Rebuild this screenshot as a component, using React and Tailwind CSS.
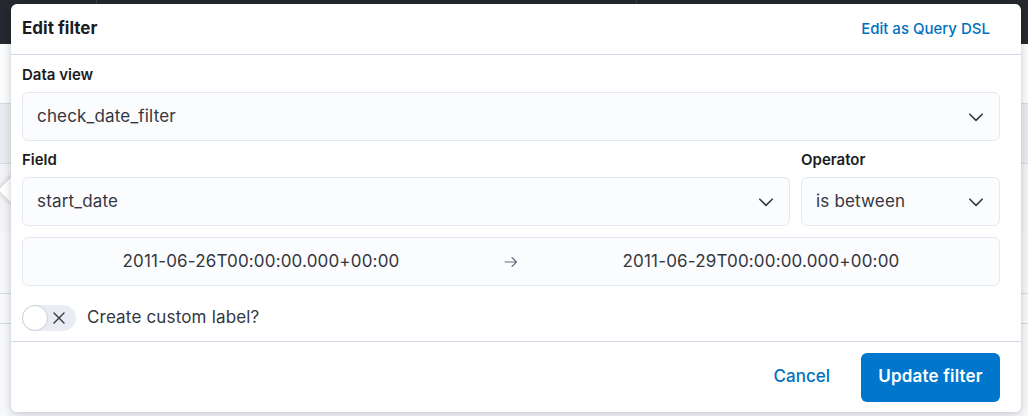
import React from "react";

function Chevron() {
  return (
    <svg width="18" height="18" viewBox="0 0 16 16" fill="none" className="shrink-0">
      <path d="M2.5 5.5 L8 11 L13.5 5.5" stroke="#343741" strokeWidth="1.4" strokeLinecap="round" strokeLinejoin="round" />
    </svg>
  );
}

function Select({ value, className = "" }) {
  return (
    <div className={`h-[49px] rounded-[6px] border border-[#e4e8f1] bg-[#fbfcfd] flex items-center justify-between pl-[14px] pr-[14px] ${className}`}>
      <span className="text-[17px] tracking-[0.01em] text-[#343741]">{value}</span>
      <Chevron />
    </div>
  );
}

function Label({ children }) {
  return <div className="text-[15px] font-semibold text-[#1a1c21] h-[20px] leading-[20px] mb-[7px]">{children}</div>;
}

export default function App() {
  return (
    <div className="relative w-[1028px] h-[416px] overflow-hidden bg-[#f7f8fc]" style={{ fontFamily: "Inter, 'Noto Sans', sans-serif" }}>
      {/* background app */}
      <div className="flex flex-col h-full">
        <div className="h-[44px] bg-[#25282f] flex">
          <div className="w-[97px] border-r border-[#3a3d45]" />
          <div className="w-[540px] border-r border-[#3a3d45]" />
        </div>
        <div className="h-[60px] bg-[#fafbfd] border-b border-[#d3dae6]" />
        <div className="h-[60px] bg-[#e9ecf1] border-b border-[#d3dae6]" />
        <div className="h-[68px] bg-[#f1f3f7]" />
        <div className="h-[62px] bg-[#f5f6f9] border-b border-[#d3dae6]" />
        <div className="h-[30px] bg-[#f7f8fb] border-b border-[#d3dae6]" />
        <div className="flex-1 bg-[#f7f8fb]" />
      </div>

      {/* popover arrow */}
      <div className="absolute left-[3px] top-[179px] w-[22px] h-[22px] bg-white rotate-45 shadow-[-2px_2px_4px_rgba(0,0,0,0.12)]" />

      {/* popover */}
      <div className="absolute left-[11px] top-[4px] w-[1010px] h-[408px] bg-white rounded-[6px] shadow-[0_2px_8px_rgba(0,0,0,0.2)] flex flex-col text-[#343741]">
        <div className="h-[51px] shrink-0 border-b border-[#d3dae6] flex items-center justify-between pl-[11px] pr-[31px]">
          <span className="text-[17px] font-bold text-[#1a1c21]">Edit filter</span>
          <span className="text-[15px] font-medium text-[#0071c2]">Edit as Query DSL</span>
        </div>
        <div className="flex flex-col pl-[11px] pr-[21px] pt-[10px] pb-[10px] border-b border-[#d3dae6]">
          <Label>Data view</Label>
          <Select value="check_date_filter" />
          <div className="flex gap-[11px] mt-[9px]">
            <div className="flex-1 flex flex-col">
              <Label>Field</Label>
              <Select value="start_date" />
            </div>
            <div className="w-[199px] flex flex-col">
              <Label>Operator</Label>
              <Select value="is between" />
            </div>
          </div>
          <div className="mt-[11px] h-[49px] rounded-[6px] border border-[#e4e8f1] bg-[#fbfcfd] flex items-center text-[17px] tracking-[0.01em] text-[#343741]">
            <div className="flex-1 text-center">2011-06-26T00:00:00.000+00:00</div>
            <div className="w-[24px] flex justify-center">
              <svg width="14" height="12" viewBox="0 0 14 12" fill="none">
                <path d="M1 6 H12.5 M8 1.5 L12.5 6 L8 10.5" stroke="#69707d" strokeWidth="1.1" strokeLinecap="round" strokeLinejoin="round" />
              </svg>
            </div>
            <div className="flex-1 text-center">2011-06-29T00:00:00.000+00:00</div>
          </div>
          <div className="mt-[19px] flex items-center gap-[11px]">
            <div className="relative w-[54px] h-[26px] rounded-full bg-[#e9edf3] flex items-center justify-end pr-[10px]">
              <div className="absolute left-0 top-0 w-[26px] h-[26px] rounded-full bg-white border border-[#c9ced8]" />
              <svg width="14" height="14" viewBox="0 0 14 14" fill="none">
                <path d="M2 2 L12 12 M12 2 L2 12" stroke="#343741" strokeWidth="1.4" strokeLinecap="round" />
              </svg>
            </div>
            <span className="text-[17px] tracking-[0.01em] text-[#343741]">Create custom label?</span>
          </div>
        </div>
        <div className="flex-1 flex items-center justify-end gap-[31px] pr-[21px]">
          <span className="text-[17px] font-medium text-[#0071c2]">Cancel</span>
          <div className="h-[49px] w-[139px] rounded-[6px] bg-[#0077cc] flex items-center justify-center text-white text-[17px] tracking-[0.01em] font-semibold">Update filter</div>
        </div>
      </div>
    </div>
  );
}
